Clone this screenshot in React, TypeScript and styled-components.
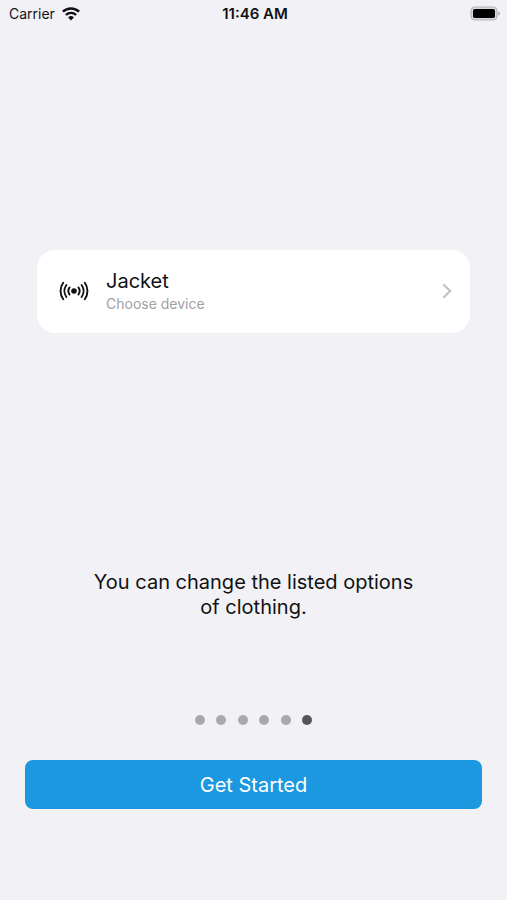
import React from "react";
import styled, { createGlobalStyle } from "styled-components";

const GlobalStyle = createGlobalStyle`
  *, *::before, *::after { box-sizing: border-box; }
  body {
    margin: 0;
    background: #f1f1f6;
    color: #111113;
    font-family: Inter, "Liberation Sans", sans-serif;
  }
  button { font: inherit; border: 0; cursor: pointer; }
`;

const Screen = styled.div`
  display: flex;
  flex-direction: column;
  min-height: 100vh;
`;

const StatusBar = styled.header`
  display: grid;
  grid-template-columns: 1fr auto 1fr;
  align-items: center;
  height: 27px;
  padding: 0 6px 0 9px;
  font-size: 14px;
  line-height: 20px;
`;

const Carrier = styled.div`
  display: flex;
  align-items: center;
  gap: 7px;
`;

const Clock = styled.time`
  font-size: 15px;
  font-weight: 600;
`;

const Battery = styled.svg`
  justify-self: end;
`;

const Stage = styled.main`
  flex: 1;
  display: flex;
  flex-direction: column;
  padding: 223px 25px 91px;
`;

const DeviceCard = styled.button`
  display: flex;
  align-items: center;
  height: 83px;
  margin: 0 12px;
  padding: 0 18px 2px 22px;
  border-radius: 18px;
  background: #ffffff;
  color: inherit;
  text-align: left;
`;

const DeviceText = styled.span`
  flex: 1;
  display: flex;
  flex-direction: column;
  margin-left: 17px;
`;

const DeviceName = styled.span`
  font-size: 20px;
  line-height: 26px;
`;

const DeviceHint = styled.span`
  font-size: 14px;
  line-height: 20px;
  color: #a1a1a3;
`;

const Message = styled.p`
  max-width: 340px;
  margin: auto auto 95px;
  font-size: 20px;
  line-height: 25px;
  text-align: center;
`;

const Pager = styled.nav`
  display: flex;
  justify-content: space-between;
  align-self: center;
  width: 118px;
  margin-bottom: 35px;
`;

const PageDot = styled.button<{ $active: boolean }>`
  width: 10px;
  height: 10px;
  padding: 0;
  border-radius: 50%;
  background: ${({ $active }) => ($active ? "#55555a" : "#a9a9ad")};
`;

const StartButton = styled.button`
  height: 49px;
  border-radius: 8px;
  background: #1b98df;
  color: #ffffff;
  font-size: 20px;
`;

const pages = [1, 2, 3, 4, 5, 6];

function WifiIcon() {
  return (
    <svg width="18" height="14" viewBox="0 0 18 14" aria-hidden="true" fill="none" stroke="#111113">
      <path d="M.9 4.7a11.6 11.6 0 0 1 16.2 0" strokeWidth="2.5" />
      <path d="M3.9 8a7.3 7.3 0 0 1 10.2 0" strokeWidth="2.4" />
      <path d="M9 13.4 6.1 10.5a4.1 4.1 0 0 1 5.8 0z" fill="#111113" stroke="none" />
    </svg>
  );
}

function SignalIcon() {
  return (
    <svg width="30" height="22" viewBox="0 0 30 22" aria-hidden="true" fill="none" stroke="#111113" strokeWidth="1.9" strokeLinecap="round">
      <circle cx="15" cy="11" r="2.8" fill="#111113" stroke="none" />
      <path d="M10.6 7.4a6.2 6.2 0 0 0 0 7.2M7.4 5a10.2 10.2 0 0 0 0 12M4.2 2.8a14 14 0 0 0 0 16.4" />
      <path d="M19.4 7.4a6.2 6.2 0 0 1 0 7.2M22.6 5a10.2 10.2 0 0 1 0 12M25.8 2.8a14 14 0 0 1 0 16.4" />
    </svg>
  );
}

function ChevronIcon() {
  return (
    <svg width="10" height="16" viewBox="0 0 10 16" aria-hidden="true" fill="none" stroke="#c3c3c6" strokeWidth="2.2">
      <path d="M1.2 1.2 8.2 8l-7 6.8" />
    </svg>
  );
}

export default function App() {
  return (
    <>
      <GlobalStyle />
      <Screen>
        <StatusBar>
          <Carrier>
            Carrier
            <WifiIcon />
          </Carrier>
          <Clock>11:46 AM</Clock>
          <Battery width="31" height="16" viewBox="0 0 31 16" role="img" aria-label="Battery full">
            <rect x="1" y="1" width="26" height="13" rx="4" fill="#d9d9dc" stroke="#b4b4b7" strokeWidth="1.2" />
            <rect x="3" y="3" width="22" height="9" rx="1.8" fill="#000000" />
            <path d="M28.4 5.4c2.2.8 2.2 3.4 0 4.2z" fill="#a6a6a9" />
          </Battery>
        </StatusBar>
        <Stage>
          <DeviceCard type="button">
            <SignalIcon />
            <DeviceText>
              <DeviceName>Jacket</DeviceName>
              <DeviceHint>Choose device</DeviceHint>
            </DeviceText>
            <ChevronIcon />
          </DeviceCard>
          <Message>You can change the listed options of clothing.</Message>
          <Pager aria-label="Introduction pages">
            {pages.map((page) => (
              <PageDot
                key={page}
                type="button"
                $active={page === pages.length}
                aria-label={`Page ${page}`}
                aria-current={page === pages.length ? "page" : undefined}
              />
            ))}
          </Pager>
          <StartButton type="button">Get Started</StartButton>
        </Stage>
      </Screen>
    </>
  );
}
